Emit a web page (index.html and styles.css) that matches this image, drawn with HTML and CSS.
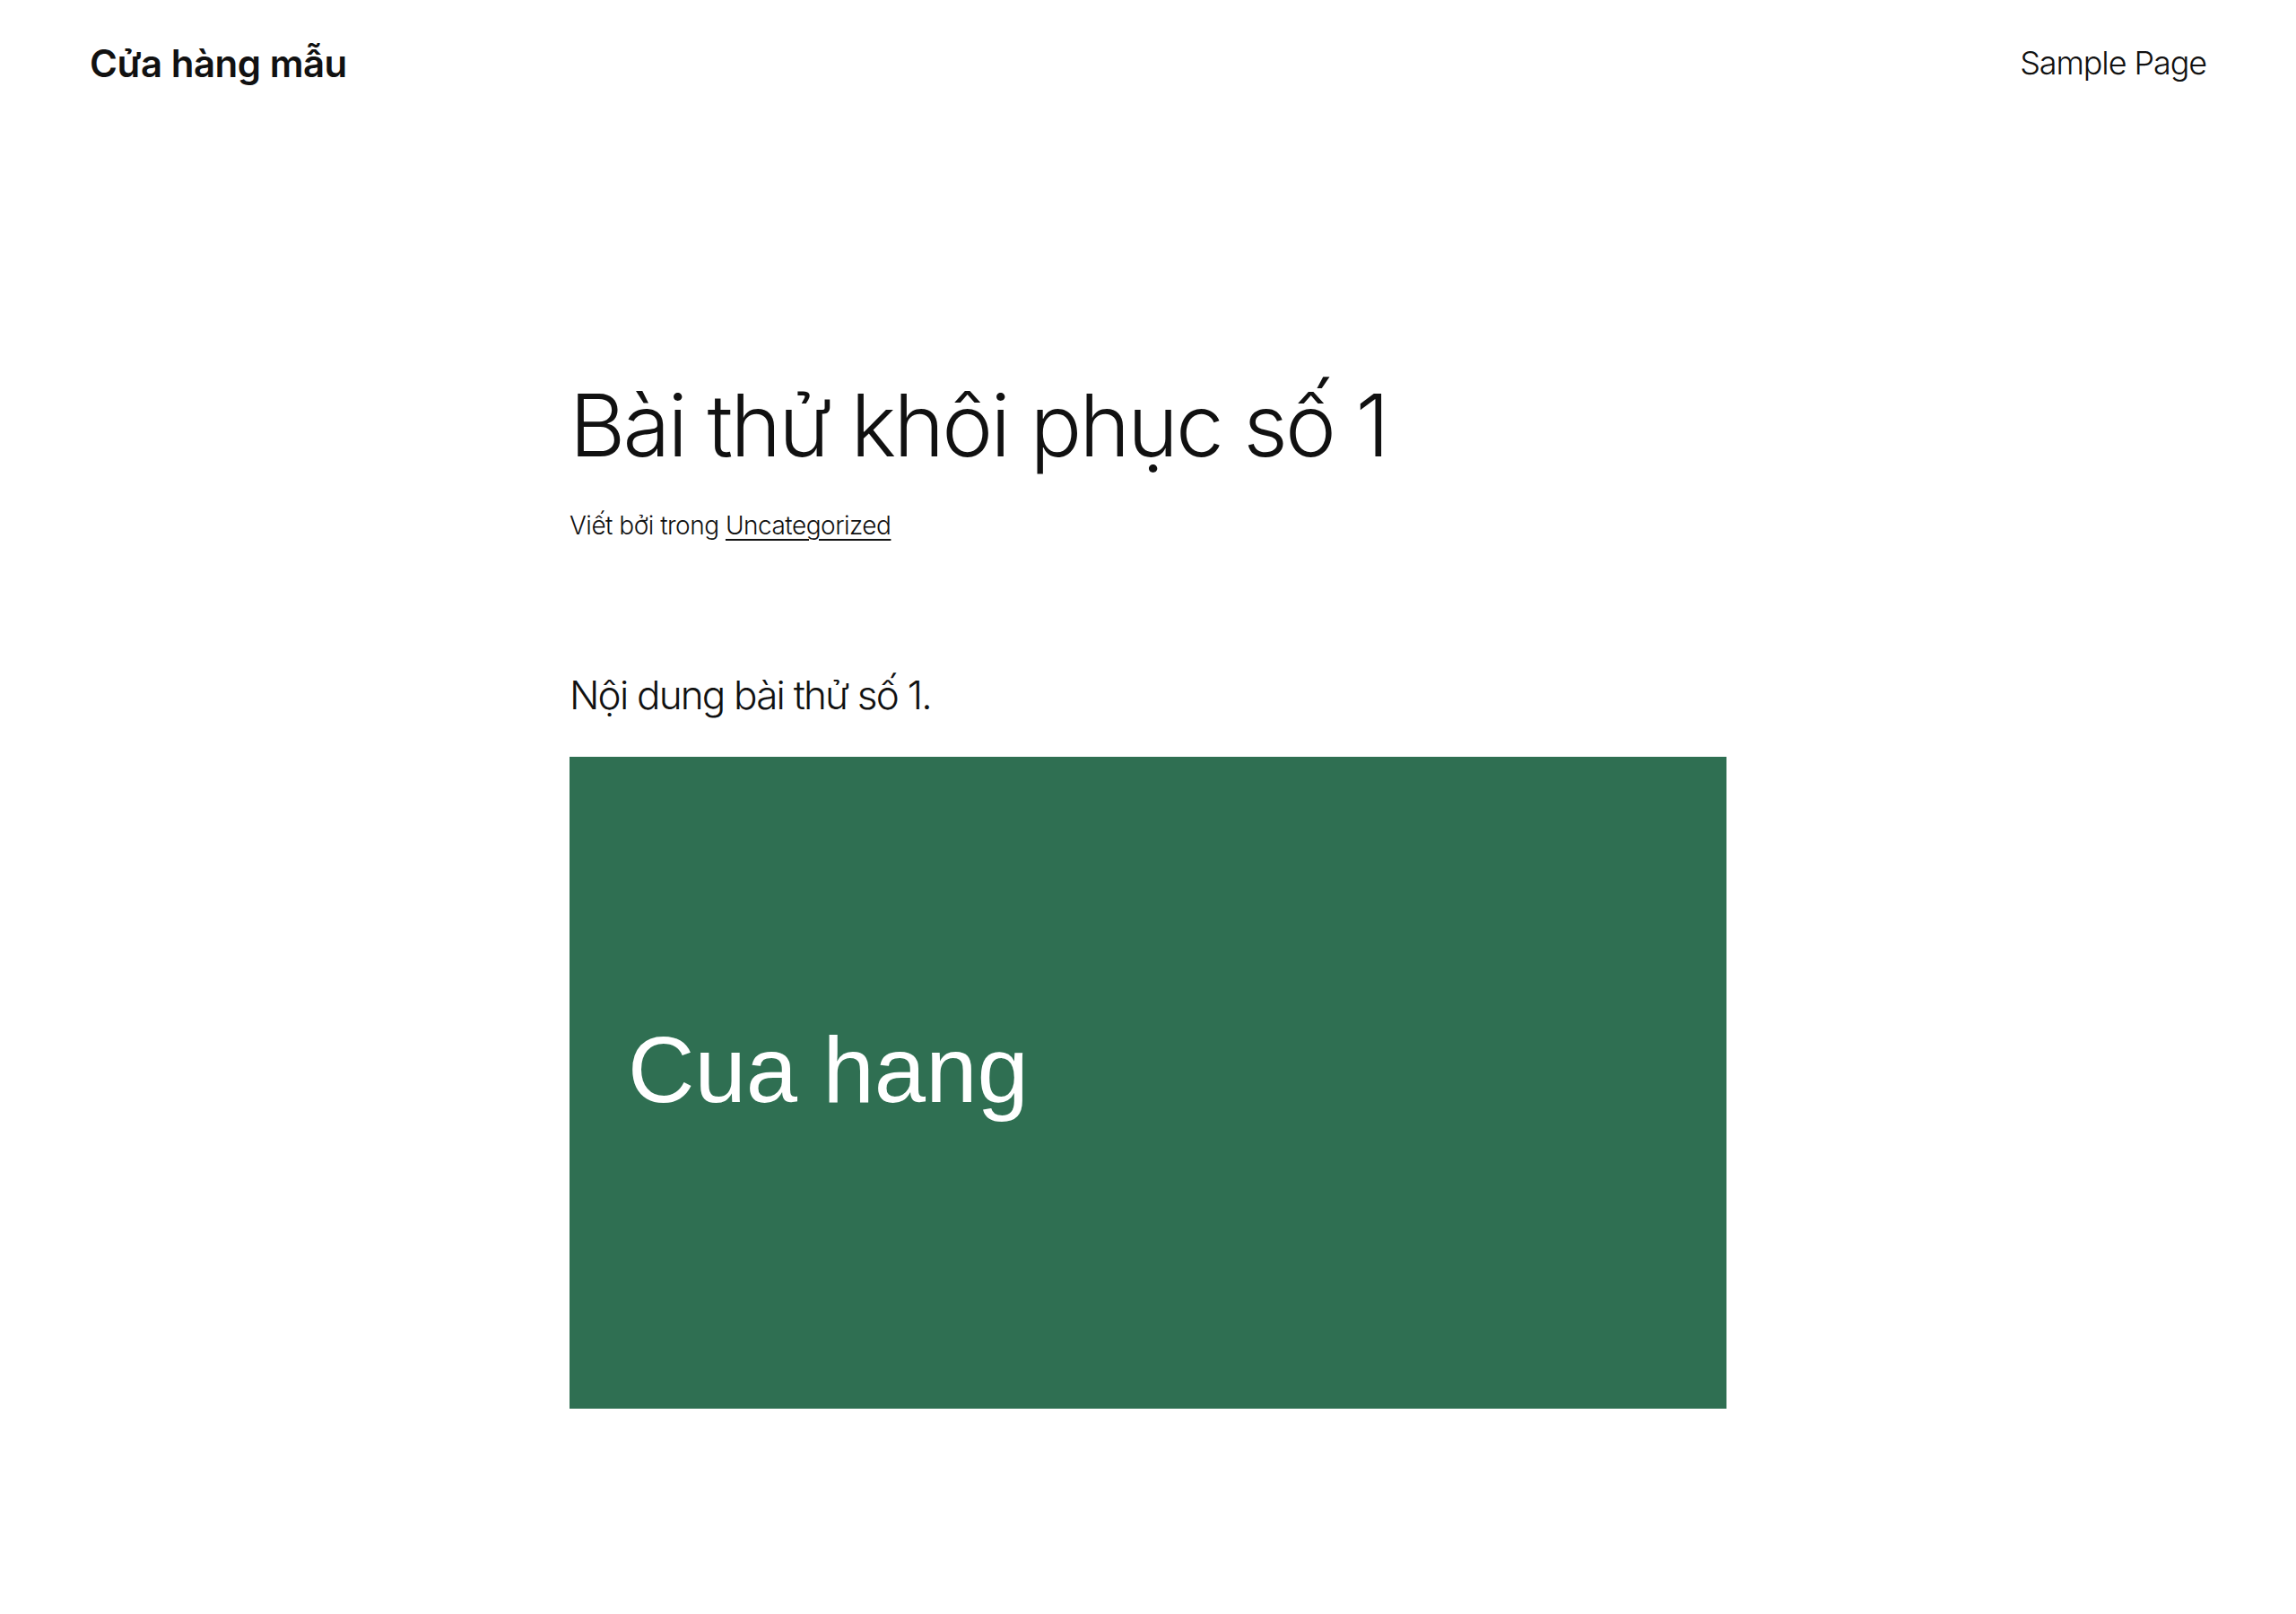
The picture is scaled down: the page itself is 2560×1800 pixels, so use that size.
FILE: index.html
```html
<!DOCTYPE html>
<html lang="vi">
<head>
<meta charset="utf-8">
<title>Bài thử khôi phục số 1 – Cửa hàng mẫu</title>
<link rel="stylesheet" href="styles.css">
</head>
<body>
<header class="site-header">
  <a class="site-title" href="#">Cửa hàng mẫu</a>
  <nav class="site-nav"><a href="#">Sample Page</a></nav>
</header>
<main class="post">
  <h1 class="post-title">Bài thử khôi phục số 1</h1>
  <div class="post-meta">Viết bởi trong <a href="#">Uncategorized</a></div>
  <div class="post-content">
    <p>Nội dung bài thử số 1.</p>
    <figure class="post-image">
      <div class="image-art"><span>Cua hang</span></div>
    </figure>
  </div>
</main>
</body>
</html>
```

FILE: styles.css
```css
html, body {
  margin: 0;
  padding: 0;
  background: #ffffff;
}

body {
  font-family: Inter, "Noto Sans", "Liberation Sans", sans-serif;
  color: #111111;
  font-weight: 300;
}

a {
  color: inherit;
}

.site-header {
  display: flex;
  justify-content: space-between;
  align-items: center;
  height: 140px;
  padding: 0 100px;
  box-sizing: border-box;
}

.site-title {
  font-size: 42px;
  font-weight: 600;
  letter-spacing: -0.5px;
  text-decoration: none;
}

.site-nav a {
  font-size: 36px;
  font-weight: 300;
  letter-spacing: -1.1px;
  text-decoration: none;
}

.post {
  width: 1290px;
  margin: 0 auto;
  padding-top: 280px;
}

.post-title {
  margin: 0;
  font-size: 96px;
  font-weight: 300;
  line-height: 1.125;
  letter-spacing: -2.75px;
}

.post-meta {
  margin-top: 39px;
  font-size: 28px;
  line-height: 1.4;
  letter-spacing: -0.5px;
}

.post-meta a {
  text-decoration-thickness: 2px;
  text-underline-offset: 5px;
}

.post-content {
  margin-top: 139px;
}

.post-content p {
  margin: 0;
  font-size: 44px;
  line-height: 1.4;
  letter-spacing: -1.8px;
}

.post-image {
  margin: 37px 0 0 0;
}

.image-art {
  height: 727px;
  background: #2f6f52;
  box-sizing: border-box;
  padding: 298px 0 0 65px;
}

.image-art span {
  display: block;
  font-family: "Liberation Sans", Arial, sans-serif;
  font-weight: 400;
  font-size: 103px;
  line-height: 1;
  color: #ffffff;
}
```
